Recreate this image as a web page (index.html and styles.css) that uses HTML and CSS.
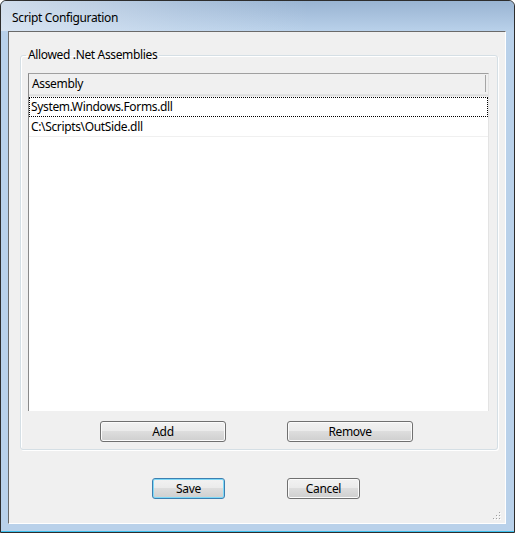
FILE: index.html
```html
<!DOCTYPE html>
<html>
<head>
<meta charset="utf-8">
<link rel="stylesheet" href="styles.css">
</head>
<body>
<div class="window">
  <div class="titlebar"><span class="title">Script Configuration</span></div>
  <div class="client">
    <fieldset class="group">
      <legend class="group-label">Allowed .Net Assemblies</legend>
      <div class="listview">
        <div class="lv-header"><div class="lv-col">Assembly</div></div>
        <div class="lv-row lv-focus">System.Windows.Forms.dll</div>
        <div class="lv-row">C:\Scripts\OutSide.dll</div>
      </div>
      <div class="group-buttons">
        <button class="btn btn-wide">Add</button>
        <button class="btn btn-wide">Remove</button>
      </div>
    </fieldset>
    <div class="dialog-buttons">
      <button class="btn btn-default">Save</button>
      <button class="btn">Cancel</button>
    </div>
    <svg class="grip" width="8" height="9" viewBox="0 0 8 9">
      <rect x="6" y="0" width="1" height="1" fill="#a0a0a0"/>
      <rect x="3" y="3" width="1" height="1" fill="#a0a0a0"/>
      <rect x="6" y="3" width="1" height="1" fill="#a0a0a0"/>
      <rect x="0" y="6" width="1" height="1" fill="#a0a0a0"/>
      <rect x="3" y="6" width="1" height="1" fill="#a0a0a0"/>
      <rect x="6" y="6" width="1" height="1" fill="#a0a0a0"/>
      <rect x="7" y="1" width="1" height="1" fill="#fff"/>
      <rect x="4" y="4" width="1" height="1" fill="#fff"/>
      <rect x="7" y="4" width="1" height="1" fill="#fff"/>
      <rect x="1" y="7" width="1" height="1" fill="#fff"/>
      <rect x="4" y="7" width="1" height="1" fill="#fff"/>
      <rect x="7" y="7" width="1" height="1" fill="#fff"/>
    </svg>
  </div>
</div>
</body>
</html>
```
FILE: styles.css
```css
html, body {
  margin: 0;
  padding: 0;
  background: #ffffff;
}
body {
  font-family: "Noto Sans", "Open Sans", sans-serif;
  font-size: 12px;
  letter-spacing: -0.35px;
  color: #000;
}
.window {
  width: 515px;
  height: 533px;
  box-sizing: border-box;
  border: 1px solid #2d2d2d;
  border-radius: 6px 6px 0 0;
  background: #b9d1ea;
  padding: 0 8px 8px 7px;
  display: flex;
  flex-direction: column;
  box-shadow: inset 0 -1px 0 #3cc0ec;
  overflow: hidden;
}
.titlebar {
  height: 30px;
  flex: none;
  margin: 0 -8px 0 -7px;
  padding: 9px 0 0 11px;
  box-sizing: border-box;
  background:
    linear-gradient(to right, rgba(226, 234, 244, 0.75) 0%, rgba(226, 234, 244, 0.25) 35%, rgba(226, 234, 244, 0) 60%),
    linear-gradient(to bottom, #99b4d2 0%, #a9c2de 50%, #b9d1ea 100%);
  border-radius: 5px 5px 0 0;
}
.title {
  line-height: 16px;
  display: block;
}
.client {
  position: relative;
  flex: 1;
  background: #f0f0f0;
  border-top: 1px solid #6a6a6a;
  border-left: 1px solid #6a6a6a;
  border-right: 1px solid #ffffff;
  border-bottom: 1px solid #ffffff;
  display: flex;
  flex-direction: column;
  align-items: flex-start;
}
.group {
  margin: 16px 0 0 11px;
  width: 478px;
  height: 402px;
  box-sizing: border-box;
  padding: 10px 8px 0 7px;
  border: 1px solid #d5dfe5;
  border-radius: 3px;
  box-shadow: inset 1px 1px 0 #ffffff, 1px 1px 0 #ffffff;
  display: flex;
  flex-direction: column;
  align-items: flex-start;
  min-width: 0;
}
.group-label {
  padding: 0 2px 2px 2px;
  margin-left: -2px;
  line-height: 13px;
}
.listview {
  width: 461px;
  height: 338px;
  box-sizing: border-box;
  background: #ffffff;
  border-top: 1px solid #a0a0a0;
  border-left: 1px solid #8a8a8a;
  border-right: 1px solid #e3e3e3;
  flex: none;
}
.lv-header {
  height: 23px;
  display: flex;
  align-items: flex-start;
  background: linear-gradient(to bottom, #f0f0f0 0, #f0f0f0 20px, #d5d5d5 21px, #e6e6e6 22px, #f7f7f7 23px);
}
.lv-col {
  width: 457px;
  height: 17px;
  margin-top: 1px;
  padding-left: 3px;
  box-sizing: border-box;
  border-right: 1px solid #a5a5a5;
  line-height: 17px;
}
.lv-row {
  height: 20px;
  box-sizing: border-box;
  padding-left: 2px;
  line-height: 19px;
  border-bottom: 1px solid #f0f0f0;
  white-space: nowrap;
}
.lv-focus {
  border: 1px dotted #000;
  padding-left: 1px;
  line-height: 18px;
}
.group-buttons {
  display: flex;
  gap: 61px;
  margin: 10px 0 0 72px;
}
.btn {
  font-family: inherit;
  font-size: 12px;
  letter-spacing: -0.35px;
  color: #000;
  height: 21px;
  width: 73px;
  padding: 0;
  line-height: 17px;
  border: 1px solid #707070;
  border-radius: 3px;
  background: linear-gradient(to bottom, #f2f2f2 0%, #ebebeb 45%, #dddddd 50%, #cfcfcf 100%);
  box-shadow: inset 0 0 0 1px #fbfbfb;
  box-sizing: border-box;
}
.btn-wide {
  width: 126px;
}
.btn-default {
  border-color: #3c7fb1;
  box-shadow: inset 0 0 0 1px #7fd9f7;
}
.dialog-buttons {
  display: flex;
  gap: 62px;
  margin: 28px 0 0 143px;
}
.grip {
  position: absolute;
  right: 4px;
  bottom: 2px;
}
```
